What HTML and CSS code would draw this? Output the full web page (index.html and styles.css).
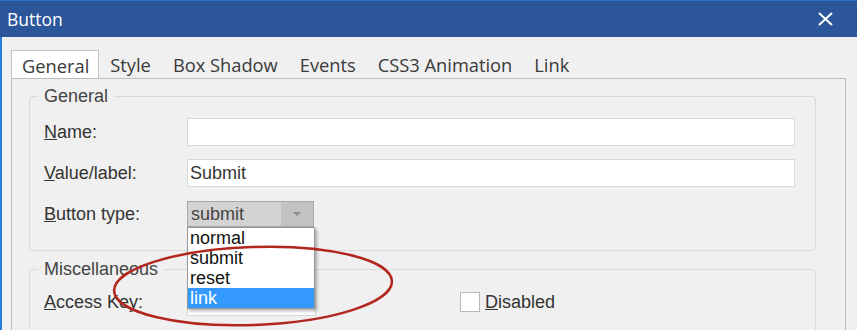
FILE: index.html
```html
<!DOCTYPE html>
<html lang="en">
<head>
    <meta charset="UTF-8">
    <meta name="viewport" content="width=device-width, initial-scale=1.0">
    <title>Button</title>
    <link rel="stylesheet" href="styles.css">
</head>
<body>
    <div class="titlebar">
        <span class="title">Button</span>
        <svg class="close" width="15" height="14" viewBox="0 0 15 14">
            <path d="M1 1 L14 13 M14 1 L1 13" stroke="#fff" stroke-width="2" fill="none"/>
        </svg>
    </div>
    <div class="window">
        <div class="tabs">
            <div class="tab active">General</div>
            <div class="tab">Style</div>
            <div class="tab">Box Shadow</div>
            <div class="tab">Events</div>
            <div class="tab">CSS3 Animation</div>
            <div class="tab">Link</div>
        </div>
        <div class="panel">
            <fieldset class="group">
                <legend>General</legend>
                <div class="row">
                    <label><u>N</u>ame:</label>
                    <div class="field"></div>
                </div>
                <div class="row">
                    <label><u>V</u>alue/label:</label>
                    <div class="field">Submit</div>
                </div>
                <div class="row">
                    <label><u>B</u>utton type:</label>
                    <div class="select-wrap">
                        <div class="select">
                            <span class="select-value">submit</span>
                            <span class="arrow"></span>
                        </div>
                        <ul class="dropdown">
                            <li>normal</li>
                            <li>submit</li>
                            <li>reset</li>
                            <li class="selected">link</li>
                        </ul>
                    </div>
                </div>
            </fieldset>
            <fieldset class="group misc">
                <legend>Miscellaneous</legend>
                <div class="misc-row">
                    <label><u>A</u>ccess Key:</label>
                    <div class="field short"></div>
                    <span class="checkbox"></span>
                    <span class="check-label"><u>D</u>isabled</span>
                </div>
            </fieldset>
        </div>
    </div>

    <svg class="annotation" width="857" height="330" viewBox="0 0 857 330">
        <ellipse cx="253" cy="286" rx="139" ry="39" transform="rotate(-2 253 286)" fill="none" stroke="#b3261e" stroke-width="2.5"/>
    </svg>
</body>
</html>
```

FILE: styles.css
```css
body {
    margin: 0;
    padding: 0;
    width: 857px;
    height: 330px;
    overflow: hidden;
    position: relative;
    background-color: #f0f0f0;
    font-family: 'Liberation Sans', Arial, sans-serif;
    color: #333;
}
.titlebar {
    height: 36px;
    border-top: 1px solid #2f6fc9;
    background-color: #2b579a;
    display: flex;
    align-items: center;
    justify-content: space-between;
    padding: 0 24px 0 7px;
}
.title {
    font-family: 'Open Sans', sans-serif;
    font-size: 17.5px;
    color: white;
}
.window {
    height: 293px;
    border-left: 2px solid #2b7bd8;
    padding-left: 9px;
    padding-right: 11px;
}
.tabs {
    display: flex;
    padding-top: 13px;
    height: 28px;
}
.tab {
    font-family: 'Open Sans', sans-serif;
    font-size: 18.3px;
    color: #3a3a3a;
    padding: 2px 11px 0;
    line-height: 26px;
}
.tab.active {
    background-color: white;
    border: 1px solid #c4c4c4;
    border-bottom: none;
    padding: 2px 9px 0 10px;
    position: relative;
    z-index: 1;
}
.panel {
    border: 1px solid #bcbcbc;
    border-bottom: none;
    height: 260px;
    padding-top: 7px;
}
.group {
    margin: 0 29px 0 17px;
    padding: 0 20px 22px 14px;
    border: 1px solid #dadada;
    border-radius: 3px;
    font-size: 18px;
}
.group legend {
    padding: 0 6px;
    margin-left: -6px;
    line-height: 20px;
    color: #444;
}
.row {
    display: flex;
    align-items: center;
    height: 28px;
    margin-top: 13px;
}
.row:first-of-type {
    margin-top: 12px;
}
.row label,
.misc-row label {
    width: 143px;
    flex-shrink: 0;
    color: #333;
}
.field {
    flex: 1;
    height: 26px;
    background-color: white;
    border: 1px solid #d8d8d8;
    line-height: 26px;
    padding-left: 2px;
}
.select-wrap {
    position: relative;
}
.select {
    width: 125px;
    height: 24px;
    border: 1px solid #a8a8a8;
    background-color: #d3d3d3;
    display: flex;
    align-items: center;
}
.select-value {
    flex: 1;
    padding-left: 3px;
    color: #444;
}
.arrow {
    width: 32px;
    height: 24px;
    background-color: #c2c2c2;
    position: relative;
}
.arrow::after {
    content: "";
    position: absolute;
    left: 12px;
    top: 10px;
    border-left: 4px solid transparent;
    border-right: 4px solid transparent;
    border-top: 4px solid #8a8a8a;
}
.dropdown {
    position: absolute;
    top: 26px;
    left: 0;
    width: 126px;
    margin: 0;
    padding: 0;
    list-style: none;
    background-color: white;
    border: 1px solid #9a9a9a;
    box-shadow: 2px 2px 3px rgba(0, 0, 0, 0.3);
    z-index: 2;
}
.dropdown li {
    height: 20px;
    line-height: 20px;
    padding-left: 2px;
    color: #111;
}
.dropdown li.selected {
    background-color: #3399ff;
    color: white;
}
.misc {
    margin-top: 8px;
    padding-bottom: 40px;
}
.misc-row {
    display: flex;
    align-items: center;
    margin-top: 9px;
    height: 28px;
}
.field.short {
    flex: none;
    width: 125px;
}
.checkbox {
    width: 18px;
    height: 18px;
    border: 1px solid #b8b8b8;
    background-color: white;
    margin-left: 144px;
    margin-right: 5px;
}
.check-label {
    color: #333;
}
.annotation {
    position: absolute;
    left: 0;
    top: 0;
    pointer-events: none;
    z-index: 5;
}
```
